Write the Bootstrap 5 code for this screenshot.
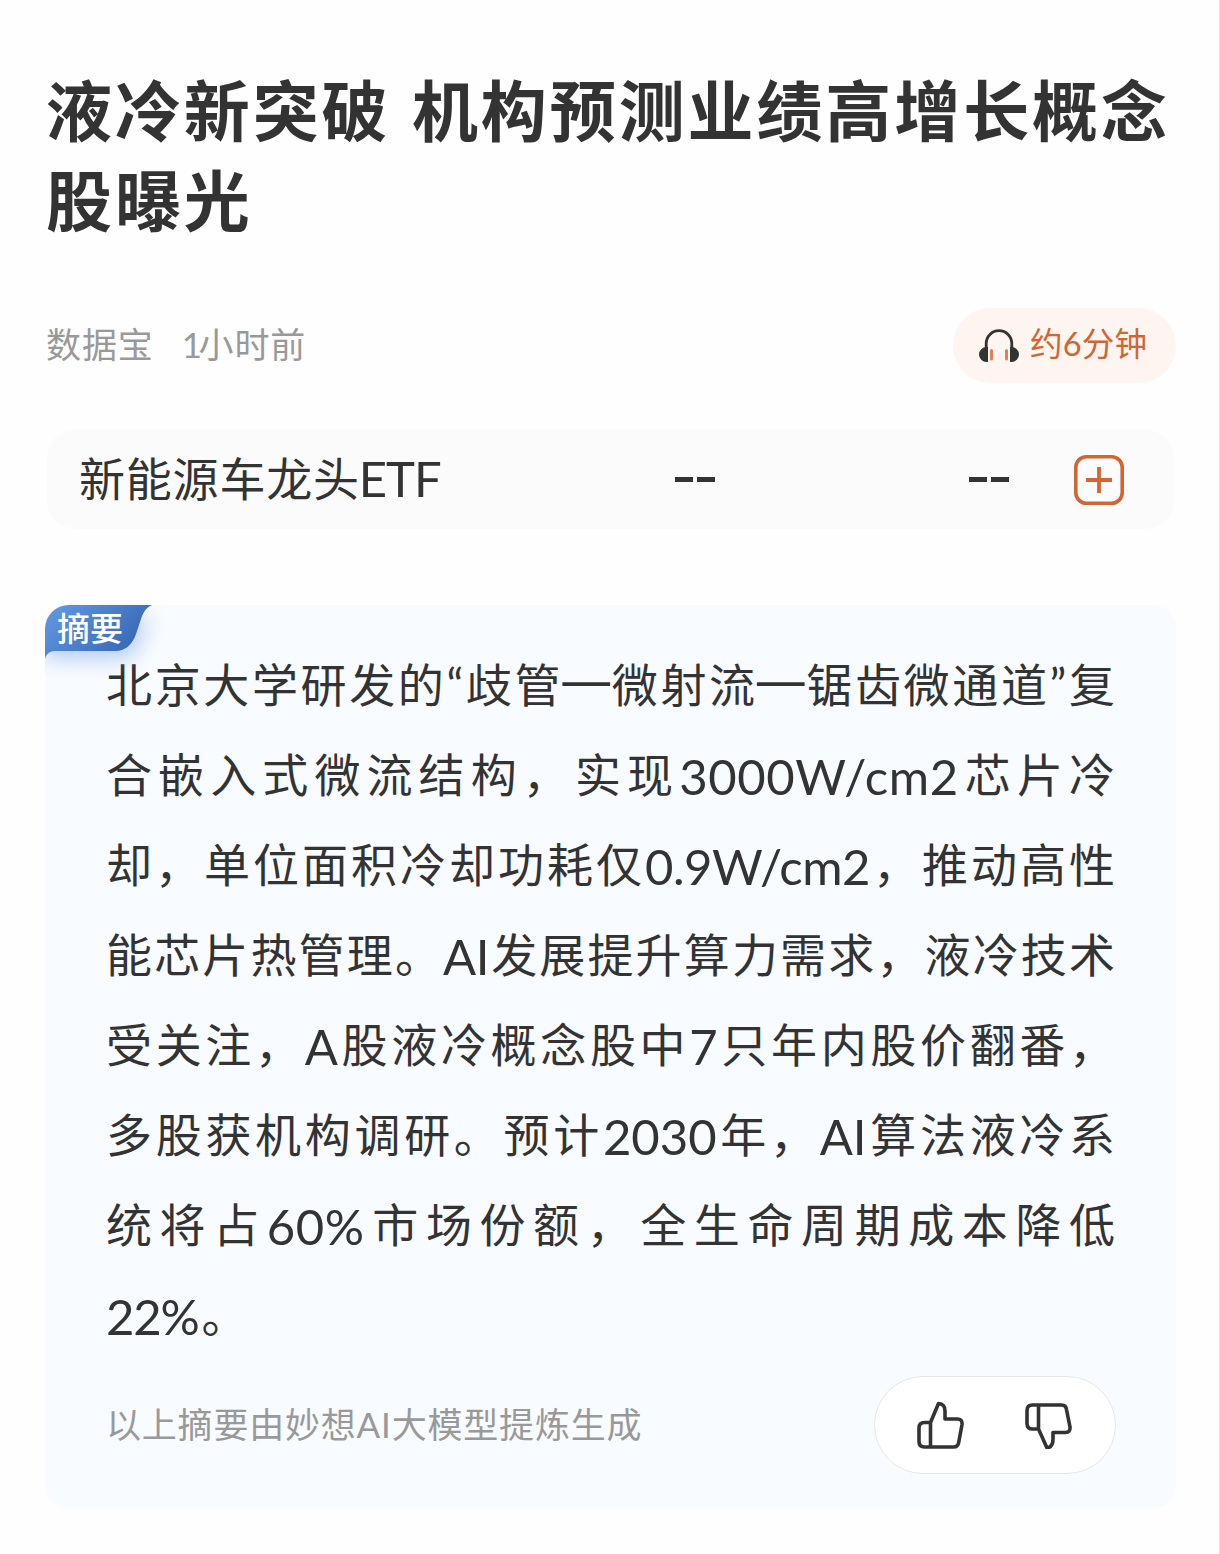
<!DOCTYPE html>
<html lang="zh-CN">
<head>
<meta charset="utf-8">
<meta name="viewport" content="width=device-width, initial-scale=1">
<title>液冷新突破 机构预测业绩高增长概念股曝光</title>
<link href="https://cdn.jsdelivr.net/npm/bootstrap@5.3.0/dist/css/bootstrap.min.css" rel="stylesheet">
<style>
body{background:#fefefe;color:#333;font-family:Lato,"Noto Sans CJK SC",sans-serif}
.article-page{min-height:1554px;padding:66px 43px 0 45px;border-right:1px solid #e6e6e6}
.headline{font-size:66px;line-height:90px;letter-spacing:2.9px;word-spacing:2.500px;font-weight:700;padding-left:1px;white-space:nowrap}
.meta-row{margin-top:62px;height:75px}
.meta-text{font-size:35px;letter-spacing:.9px;color:#999;line-height:75px;gap:30px;padding-left:1px;margin-top:-1px}
.thin-one{letter-spacing:-3.500px;margin-left:-2px}
.listen-pill{width:223px;height:75px;background:#fef5f1;color:#cf6633;font-size:32.500px;padding-left:26px;gap:11px}
.listen-pill span{line-height:70px;margin-top:-4px;letter-spacing:.2px}
.fund-row{margin:47px 2px 0;height:99px;border-radius:28px;background:#fbfbfb;padding:0 50px 0 32px;font-size:46px}
.fund-name{width:596px;line-height:90px;letter-spacing:.8px;margin-top:-1px}
.fund-name .latin{letter-spacing:-1px;vertical-align:-1px;margin-left:-1px}
.dash-pair{gap:4px;width:294px}
.dash-pair.tail{width:105px}
.dash-pair i{width:18px;height:5px;background:#333;margin-top:-1px}
.summary-card{margin-top:76px;height:904px;border-radius:24px;background:#f8fbff;padding:35px 61px 0 61px;overflow:hidden}
.summary-tag{left:0;top:0}
.tag-text{left:12px;top:0;font-size:33px;line-height:46px;color:#fff;font-weight:500}
.summary-line{font-size:46px;line-height:90px;height:90px;text-align:justify;text-align-last:justify;white-space:nowrap}
.summary-line.last-line{text-align-last:left}
.latin{font-size:49px;line-height:0;vertical-align:-3px}
.tight{letter-spacing:-.5px}
.tighter{letter-spacing:-1.200px;margin-right:3px}
.wide{letter-spacing:.6px}
.long-dash{font-family:"Noto Sans CJK SC",sans-serif;font-size:54px;line-height:0;margin:0 -4px;vertical-align:-3px;-webkit-text-stroke:1.500px #333}
.foot-row{margin:16px -1px 0 0;height:97px}
.credit{color:#999;font-size:35px;letter-spacing:.8px;margin-top:-1px}
.vote-pill{width:242px;height:98px;border:1px solid #e6e6e6;background:#fff;padding:0 43px 0 41px}
</style>
</head>
<body>
<main class="article-page">
  <h1 class="headline mb-0">液冷新突破 机构预测业绩高增长概念<br>股曝光</h1>
  <div class="meta-row d-flex justify-content-between">
    <div class="meta-text d-flex"><span>数据宝</span><span><span class="thin-one">1</span>小时前</span></div>
    <div class="listen-pill rounded-pill d-flex align-items-center">
      <svg width="40" height="34" viewBox="0 0 40 34" aria-hidden="true"><path d="M7.2 20V14.5a12.8 12.8 0 0 1 25.6 0V20" fill="none" stroke="#333" stroke-width="2.8"/><path d="M9 18V33H7.500A7.500 7.500 0 0 1 7.500 18ZM31 18V33h1.500A7.500 7.500 0 0 0 32.500 18Z" fill="#333"/><path d="M12.500 21.500v8.500M27.500 21.500v8.500" stroke="#dd8352" stroke-width="3" stroke-linecap="round"/></svg>
      <span>约6分钟</span>
    </div>
  </div>
  <div class="fund-row d-flex align-items-center">
    <div class="fund-name flex-shrink-0">新能源车龙头<span class="latin">ETF</span></div>
    <div class="dash-pair d-flex flex-shrink-0"><i></i><i></i></div>
    <div class="dash-pair tail d-flex flex-shrink-0"><i></i><i></i></div>
    <svg class="flex-shrink-0" width="50" height="50" viewBox="0 0 50 50" aria-hidden="true"><rect x="1.800" y="1.800" width="46.400" height="46.400" rx="10.500" fill="none" stroke="#cf6633" stroke-width="3.600"/><path d="M12 25h26M25 12v26" stroke="#cf6633" stroke-width="3.800"/></svg>
  </div>
  <section class="summary-card position-relative">
    <svg class="summary-tag position-absolute" width="150" height="90" viewBox="0 0 150 90" aria-hidden="true">
      <defs><linearGradient id="tagFill" x1="0" y1="0" x2="1" y2="0.500"><stop offset="0" stop-color="#629ae6"/><stop offset="1" stop-color="#3767b4"/></linearGradient><filter id="tagGlow" x="-30%" y="-50%" width="180%" height="250%"><feGaussianBlur stdDeviation="10"/></filter></defs>
      <path d="M0 14H108Q102 16 98 26L95 36Q89 54 72 54H0Z" fill="#6f9be0" opacity=".48" filter="url(#tagGlow)"/>
      <path d="M0 0H107Q101 2 97 11L91 29Q85 46 70 46H10Q2 46 0 54Z" fill="url(#tagFill)"/>
    </svg>
    <div class="tag-text position-absolute">摘要</div>
    <div class="summary-line">北京大学研发的“歧管<span class="long-dash">—</span>微射流<span class="long-dash">—</span>锯齿微通道”复</div>
    <div class="summary-line">合嵌入式微流结构，实现<span class="latin wide">3000W/cm2</span>芯片冷</div>
    <div class="summary-line">却，单位面积冷却功耗仅<span class="latin tight">0.9W/cm2</span>，推动高性</div>
    <div class="summary-line">能芯片热管理。<span class="latin tight">AI</span>发展提升算力需求，液冷技术</div>
    <div class="summary-line">受关注，<span class="latin">A</span>股液冷概念股中<span class="latin">7</span>只年内股价翻番，</div>
    <div class="summary-line">多股获机构调研。预计<span class="latin">2030</span>年，<span class="latin">AI</span>算法液冷系</div>
    <div class="summary-line">统将占<span class="latin wide">60%</span>市场份额，全生命周期成本降低</div>
    <div class="summary-line last-line"><span class="latin tighter">22%</span>。</div>
    <div class="foot-row d-flex justify-content-between align-items-center">
      <div class="credit">以上摘要由妙想AI大模型提炼生成</div>
      <div class="vote-pill rounded-pill d-flex justify-content-between align-items-center">
        <svg width="48" height="48" viewBox="0 0 48 48" fill="none" stroke="#333" stroke-width="3.600" stroke-linejoin="round" aria-hidden="true"><path d="M14.500 21.500H8.500Q3 21.500 3 27V40.500Q3 46 8.500 46H37.500Q42 46 42.700 41.500L46 23.500Q46.500 18 41.500 18H29V10Q29 3 22.500 2.500L14.500 21.500V46"/></svg>
        <svg width="48" height="48" viewBox="0 0 48 48" fill="none" stroke="#333" stroke-width="3.600" stroke-linejoin="round" aria-hidden="true"><path d="M14.500 28H8.500Q3 28 3 22.500V9.500Q3 4 8.500 4H37.500Q42 4 42.500 8.500L46 26Q46.500 31.500 41.500 31.500H29V38Q29 46 23 47L14.500 28V4"/></svg>
      </div>
    </div>
  </section>
</main>
<script src="https://cdn.jsdelivr.net/npm/bootstrap@5.3.0/dist/js/bootstrap.bundle.min.js"></script>
</body>
</html>
